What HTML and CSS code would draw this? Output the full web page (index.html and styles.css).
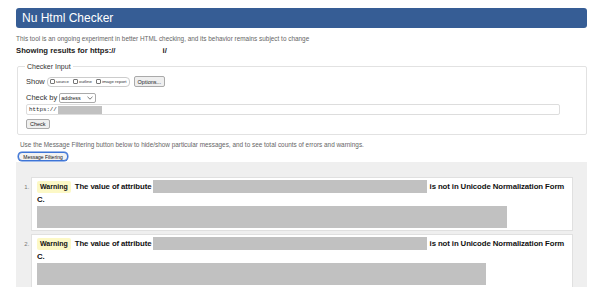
FILE: index.html
```html
<!DOCTYPE html>
<html lang="en">
<head>
    <meta charset="UTF-8">
    <meta name="viewport" content="width=device-width, initial-scale=1.0">
    <title>Nu Html Checker</title>
    <link rel="stylesheet" href="styles.css">
</head>
<body>
    <header>
        <h1>Nu Html Checker</h1>
    </header>

    <p class="intro">This tool is an ongoing experiment in better HTML checking, and its behavior remains subject to change</p>
    <p class="results-for">Showing results for https://<span class="hidden-host"></span>i/</p>

    <form class="checker">
        <fieldset>
            <legend>Checker Input</legend>
            <div class="row show-row">
                <span class="label">Show</span>
                <span class="options-group">
                    <label><input type="checkbox"> source</label>
                    <label><input type="checkbox"> outline</label>
                    <label><input type="checkbox"> image report</label>
                </span>
                <button type="button" class="btn">Options...</button>
            </div>
            <div class="row checkby-row">
                <span class="label">Check by</span>
                <span class="select">
                    <select><option>address</option></select>
                    <svg width="6" height="4" viewBox="0 0 6 4"><path d="M0.5 0.8 L3 3.2 L5.5 0.8" fill="none" stroke="#555" stroke-width="0.8"/></svg>
                </span>
            </div>
            <div class="url-field">https://<span class="redacted"></span></div>
            <div class="row">
                <button type="submit" class="btn">Check</button>
            </div>
        </fieldset>
    </form>

    <p class="filter-note">Use the Message Filtering button below to hide/show particular messages, and to see total counts of errors and warnings.</p>
    <button type="button" class="filter-btn">Message Filtering</button>

    <section class="messages">
        <ol>
            <li>
                <p><span class="badge">Warning</span><span class="msg">The value of attribute</span> <span class="redacted attr" style="width: 274px"></span> <span class="nowrap">is not in Unicode Normalization Form</span> C.</p>
                <div class="redacted extract" style="width: 470px"></div>
            </li>
            <li>
                <p><span class="badge">Warning</span><span class="msg">The value of attribute</span> <span class="redacted attr" style="width: 274px"></span> <span class="nowrap">is not in Unicode Normalization Form</span> C.</p>
                <div class="redacted extract" style="width: 449px"></div>
            </li>
        </ol>
    </section>
</body>
</html>
```

FILE: styles.css
```css
/* Global Styles */
body {
    font-family: "Liberation Sans", Arial, sans-serif;
    margin: 0;
    padding: 8px 15px 0 16px;
    color: #222;
    background: #fff;
    overflow: hidden;
}

p {
    margin: 0;
}

/* Header */
header {
    background-color: #365d95;
    border-radius: 3px;
    height: 20px;
    padding-left: 6px;
}

header h1 {
    margin: 0;
    color: white;
    font-size: 12px;
    font-weight: normal;
    line-height: 20px;
}

.intro {
    margin-top: 6px;
    font-size: 6.4px;
    line-height: 10px;
    color: #666;
}

.results-for {
    margin-top: 2px;
    font-size: 7.7px;
    line-height: 10px;
    font-weight: bold;
}

.hidden-host {
    display: inline-block;
    width: 47px;
}

/* Checker input form */
.checker fieldset {
    margin: 6px 0 0 1px;
    padding: 0 8px 5px;
    border: 1px solid #e2e2e2;
    border-radius: 2px;
    display: flex;
    flex-direction: column;
}

.checker legend {
    font-size: 7px;
    line-height: 9px;
    padding: 0 2px;
    margin-left: -1px;
    color: #333;
}

.row {
    display: flex;
    align-items: center;
}

.label {
    font-size: 7.5px;
    color: #333;
    margin-right: 2px;
}

.show-row {
    margin-top: 5px;
    height: 11px;
}

.options-group {
    display: flex;
    align-items: center;
    height: 8px;
    padding: 0 2px;
    border: 1px solid #ccc;
    border-radius: 4px;
    gap: 4px;
    margin-right: 4px;
}

.options-group label {
    display: flex;
    align-items: center;
    font-size: 4.4px;
    color: #333;
}

.options-group input {
    appearance: none;
    width: 5px;
    height: 5px;
    margin: 0 1px 0 0;
    border: 1px solid #777;
    border-radius: 1px;
    background: white;
}

.btn {
    font-family: "Liberation Sans", Arial, sans-serif;
    font-size: 5.5px;
    color: #222;
    background: #efefef;
    border: 1px solid #aaa;
    border-radius: 2px;
    padding: 0 3px;
    height: 11px;
}

.checkby-row {
    margin-top: 6px;
    height: 9px;
}

.select {
    display: flex;
    align-items: center;
    height: 8px;
    border: 1px solid #aaa;
    border-radius: 2px;
    padding: 0 2px 0 1px;
    gap: 6px;
}

.select select {
    appearance: none;
    border: none;
    padding: 0;
    font-family: "Liberation Sans", Arial, sans-serif;
    font-size: 5.5px;
    background: transparent;
    color: #222;
}

.url-field {
    margin-top: 2px;
    width: 530px;
    height: 9px;
    border: 1px solid #ddd;
    border-radius: 2px;
    padding-left: 2px;
    display: flex;
    align-items: center;
    font-family: "Liberation Mono", monospace;
    font-size: 5.8px;
    color: #222;
}

.url-field .redacted {
    display: inline-block;
    width: 44px;
    height: 8px;
    margin-left: 1px;
}

.checker .btn[type="submit"] {
    margin-top: 4px;
    height: 10px;
}

.redacted {
    background: #c1c1c1;
}

/* Message filtering */
.filter-note {
    margin-top: 5px;
    padding-left: 4px;
    font-size: 6.4px;
    line-height: 10px;
    color: #666;
}

.filter-btn {
    display: block;
    margin: 2px 0 0 2px;
    width: 50px;
    height: 9px;
    padding: 0;
    font-family: "Liberation Sans", Arial, sans-serif;
    font-size: 5px;
    color: #111;
    background: #f2f2f2;
    border: 1px solid #3d74d6;
    border-radius: 4px;
    box-shadow: 0 0 0 0.5px #3d74d6;
}

/* Messages */
.messages {
    margin-top: 1px;
    background: #efefef;
    padding: 15px 14px 0 15px;
    height: 200px;
}

.messages ol {
    margin: 0;
    padding: 0;
}

.messages li {
    background: white;
    border: 1px solid #e0e0e0;
    padding: 2px 5px 2px;
    margin-bottom: 3px;
}

.messages li::marker {
    font-size: 6px;
    color: #777;
    letter-spacing: 0;
}

.messages li p {
    font-size: 7.8px;
    line-height: 13px;
    font-weight: bold;
    color: #111;
    letter-spacing: -0.1px;
}

.badge {
    display: inline-block;
    background: #fcf8c6;
    border-radius: 2px;
    padding: 0 3px;
    font-size: 7px;
    line-height: 12px;
    margin-right: 4px;
    letter-spacing: 0;
}

.nowrap {
    white-space: nowrap;
}

.redacted.attr {
    display: inline-block;
    height: 13px;
    vertical-align: top;
}

.redacted.extract {
    height: 22px;
}
```
